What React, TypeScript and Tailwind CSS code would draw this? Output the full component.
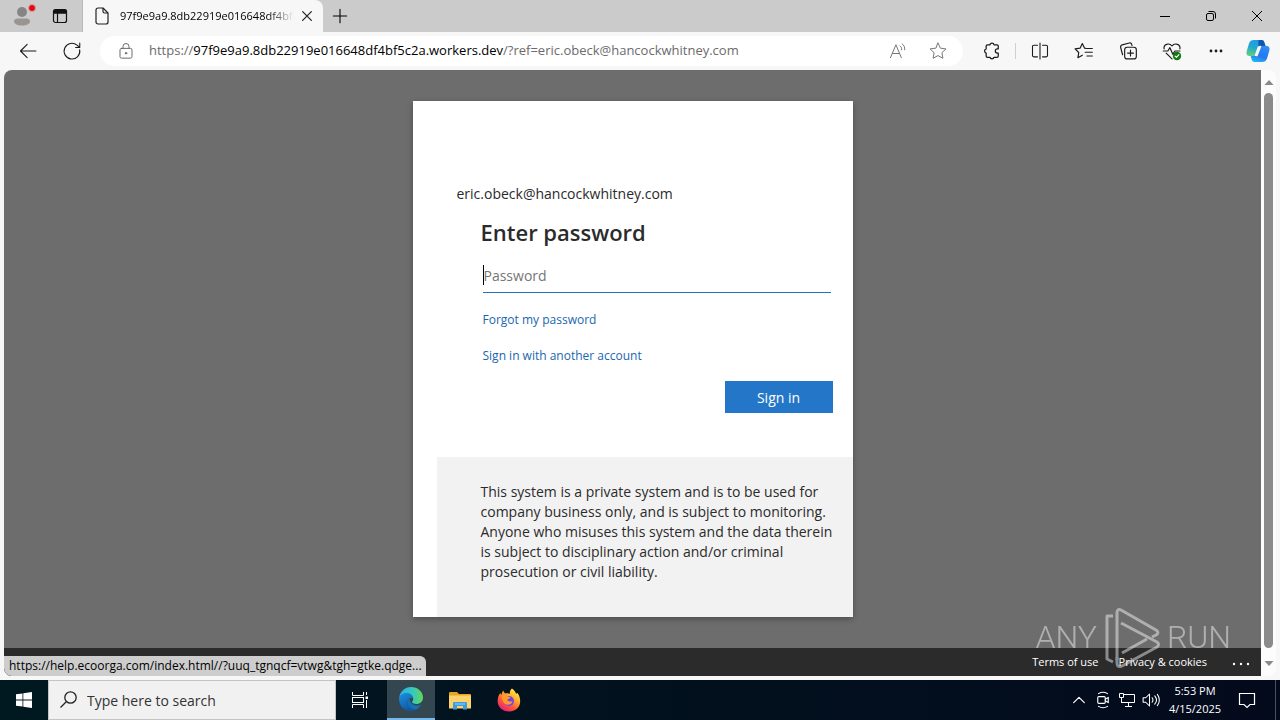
import { useState, type ReactNode } from 'react';

const TAB_TITLE = '97f9e9a9.8db22919e016648df4bf5c2a.workers.dev';

interface IconProps {
  size?: number;
  width?: number;
  className?: string;
  children: ReactNode;
}

// 24x24 line icon shared by the browser chrome and the tray
function Icon({ size = 20, width = 1.3, className, children }: IconProps) {
  return (
    <svg
      width={size}
      height={size}
      viewBox="0 0 24 24"
      fill="none"
      stroke="currentColor"
      strokeWidth={width}
      strokeLinecap="round"
      strokeLinejoin="round"
      className={className}
      aria-hidden="true"
    >
      {children}
    </svg>
  );
}

function ToolButton({ label, children }: { label: string; children: ReactNode }) {
  return (
    <button aria-label={label} className="flex h-8 w-11 shrink-0 items-center justify-center">
      {children}
    </button>
  );
}

function TabStrip() {
  return (
    <div className="flex h-8 shrink-0 bg-[#cbcbcb]">
      <button aria-label="Profile" className="relative flex w-11 items-center justify-center">
        <svg width="20" height="20" viewBox="0 0 20 20" aria-hidden="true">
          <circle cx="10" cy="6" r="5" fill="#858585" />
          <path d="M2 15.500c0-2 1.500-3 3.500-3h9c2 0 3.500 1 3.500 3 0 2.500-4 4-8 4s-8-1.500-8-4z" fill="#9a9590" />
        </svg>
        <span className="absolute top-1 left-7 size-2 rounded-full border border-[#e4a0a0] bg-[#dc0a14]" />
      </button>
      <button aria-label="Tab actions" className="flex w-8 items-center justify-center">
        <svg width="16" height="16" viewBox="0 0 16 16" fill="none" stroke="#111" aria-hidden="true">
          <rect x="1.500" y="1.500" width="13" height="13" rx="2" strokeWidth="1.200" />
          <path d="M1.500 3.500h13M1.500 2.500h13M2 5h12" strokeWidth="1.500" />
          <path d="M5.500 5v9" strokeWidth="1.200" />
        </svg>
      </button>
      <div className="ml-1.5 w-px bg-[#b9b9b9]" />
      <div className="flex w-60 items-center rounded-tr-lg bg-[#f7f7f7] pl-3">
        <svg width="14" height="18" viewBox="0 0 14 18" fill="none" stroke="#222" strokeWidth="1.200" aria-hidden="true">
          <path d="M1 3a2 2 0 0 1 2-2h5l5 5v9a2 2 0 0 1-2 2H3a2 2 0 0 1-2-2z" strokeLinejoin="round" />
          <path d="M8 1v3.500A1.500 1.500 0 0 0 9.500 6H13" />
        </svg>
        <span className="ml-[11px] w-[174px] overflow-hidden mask-r-from-85% mask-r-to-100% text-[11px] whitespace-nowrap text-black">
          {TAB_TITLE}
        </span>
        <button aria-label="Close tab" className="ml-[3px] flex size-5 items-center justify-center text-[#222]">
          <Icon size={16} width={1.900}>
            <path d="M5.500 5.500l13 13M18.500 5.500l-13 13" />
          </Icon>
        </button>
      </div>
      <button aria-label="New tab" className="ml-px flex w-8 items-center justify-center text-black">
        <Icon size={20} width={1.300}>
          <path d="M12 4v16M4 12h16" />
        </Icon>
      </button>
      <div className="ml-auto flex text-black">
        <button aria-label="Minimize" className="flex w-[46px] items-center justify-center">
          <svg width="10" height="10" viewBox="0 0 10 10" stroke="currentColor" aria-hidden="true">
            <path d="M0 5.500h10" />
          </svg>
        </button>
        <button aria-label="Restore" className="flex w-[46px] items-center justify-center">
          <svg width="12" height="12" viewBox="0 0 12 12" fill="none" stroke="currentColor" aria-hidden="true">
            <rect x="1.500" y="3.500" width="7" height="7" rx="1.500" />
            <path d="M3.500 1.500H8A2.500 2.500 0 0 1 10.500 4v4.500" />
          </svg>
        </button>
        <button aria-label="Close" className="flex w-[46px] items-center justify-center">
          <svg width="12" height="12" viewBox="0 0 12 12" stroke="currentColor" aria-hidden="true">
            <path d="M1 1l10 10M11 1L1 11" />
          </svg>
        </button>
      </div>
    </div>
  );
}

function CopilotLogo() {
  return (
    <svg width="24" height="24" viewBox="0 0 24 24" aria-hidden="true">
      <defs>
        <linearGradient id="cpLeft" x1="0.600" y1="0" x2="0.300" y2="1">
          <stop offset="0" stopColor="#1b9be8" />
          <stop offset="0.500" stopColor="#22a9cf" />
          <stop offset="1" stopColor="#5fd07f" />
        </linearGradient>
        <linearGradient id="cpRight" x1="0.700" y1="0" x2="0.300" y2="1">
          <stop offset="0" stopColor="#2f8df5" />
          <stop offset="0.600" stopColor="#2677f0" />
          <stop offset="1" stopColor="#22b6f3" />
        </linearGradient>
      </defs>
      <path d="M8 1h7.500c1.800 0 2.500 1.200 3 3l1 3h-4c-2 0-3 1-3.600 3l-1.500 5c-.5 1.400-1.300 2-2.900 2H3.500C.8 17 0 15 .6 12.500L3 4.500C3.800 2 5.500 1 8 1z" fill="url(#cpLeft)" />
      <path d="M12.500 1h3c1.800 0 2.500 1.200 3 3l1 3h-4c-1.500 0-2.500.8-3.200 2z" fill="#1456ae" />
      <path d="M16 23H8.500c-1.800 0-2.500-1.200-3-3l-.8-3H8c2 0 3-1 3.600-3l1.500-5c.5-1.400 1.300-2 2.900-2h4.500c2.700 0 3.500 2 2.900 4.500L21 19.500c-.8 2.500-2.500 3.500-5 3.500z" fill="url(#cpRight)" />
      <path d="M14.500 7.500l-3.500 9-1.500-.2 3-8.300z" fill="#f7f7f7" stroke="#f7f7f7" strokeWidth="1.600" strokeLinejoin="round" />
    </svg>
  );
}

function Toolbar() {
  return (
    <div className="flex h-[38px] shrink-0 items-center bg-[#f7f7f7] pl-1.5 text-[#1b1b1b]">
      <ToolButton label="Back">
        <Icon>
          <path d="M3 12h18.500M11 4l-8 8 8 8" />
        </Icon>
      </ToolButton>
      <ToolButton label="Refresh">
        <Icon>
          <path d="M21.200 10.500A9.400 9.400 0 1 1 18 5l3 2.500M21.300 2.500v5.200h-5" />
        </Icon>
      </ToolButton>
      <div className="mr-[7px] ml-1.5 flex h-[30px] min-w-0 flex-1 items-center rounded-full bg-white pl-4">
        <button aria-label="Site information" className="flex w-5 justify-center text-[#666]">
          <Icon size={18} width={1.300}>
            <rect x="4" y="8.500" width="16" height="13" rx="2" />
            <path d="M8 8.500V6a4 4 0 0 1 8 0v2.500" />
            <circle cx="12" cy="15" r="1" fill="currentColor" />
          </Icon>
        </button>
        <div
          role="textbox"
          aria-label="Address bar"
          contentEditable
          suppressContentEditableWarning
          className="ml-[13px] flex-1 overflow-hidden text-[13px] whitespace-nowrap text-[#6b6b6b] outline-none"
        >
          https://<span className="text-black">{TAB_TITLE}</span>/?ref=eric.obeck@hancockwhitney.com
        </div>
        <button aria-label="Read aloud" className="flex w-10 justify-center text-[#777]">
          <Icon size={20} width={1.200}>
            <path d="M3 20L9.500 4.500 16 20M5.300 15h8.500M14.500 6c1.500 1 2 2.500 1.800 4.500M17 3.500c2.500 1.700 3.300 4 3 7" />
          </Icon>
        </button>
        <button aria-label="Add to favorites" className="mr-[5px] flex w-10 justify-center text-[#777]">
          <Icon size={20} width={1.200}>
            <path d="M12 2.500l2.900 6.100 6.600.9-4.800 4.600 1.200 6.600-5.900-3.200-5.900 3.200 1.200-6.600-4.800-4.600 6.600-.9z" />
          </Icon>
        </button>
      </div>
      <ToolButton label="Extensions">
        <Icon size={20} width={1.500}>
          <path d="M6.500 4.500h3a2.600 2.600 0 0 1 5 0H18a1.500 1.500 0 0 1 1.500 1.500v3.500h-1a2.500 2.500 0 0 0 0 5h1V18a1.500 1.500 0 0 1-1.500 1.500h-3.500a2.600 2.600 0 0 1-5 0h-3A1.500 1.500 0 0 1 5 18v-3.500a2.600 2.600 0 0 1 0-5V6a1.500 1.500 0 0 1 1.500-1.500z" />
        </Icon>
      </ToolButton>
      <div className="mr-0.5 ml-px h-4 w-px shrink-0 bg-[#cfcfcf]" />
      <ToolButton label="Split screen">
        <Icon size={20} width={1.300}>
          <path d="M9 5H4.500A1.500 1.500 0 0 0 3 6.500v11A1.500 1.500 0 0 0 4.500 19H9M15 5h4.500A1.500 1.500 0 0 1 21 6.500v11a1.500 1.500 0 0 1-1.500 1.500H15M12 2.500v19" />
        </Icon>
      </ToolButton>
      <ToolButton label="Favorites">
        <Icon size={20} width={1.400}>
          <path d="M15 9l-2.300-.4L10 3 7.300 8.600l-6 .9 4.400 4.300-1 6.200L10 17M15.500 9H22M13.500 13.500H22M15.500 18H22" />
        </Icon>
      </ToolButton>
      <ToolButton label="Collections">
        <Icon size={20} width={1.400}>
          <rect x="8" y="7.500" width="14" height="14" rx="3" />
          <path d="M15 11v7M11.500 14.500h7M5.500 16.500L3.200 7.800A2.500 2.500 0 0 1 5 4.700L13.500 2.400a2.500 2.500 0 0 1 3 1.800l.3 1" />
        </Icon>
      </ToolButton>
      <ToolButton label="Browser essentials">
        <Icon size={20} width={1.400}>
          <path d="M2.500 9.500C1.500 4 8.500 1.500 12 6c3.500-4.500 10.500-2 9.500 3.500M5 14.500l7 7M1.500 12h5.500l2.500-4 3.500 8 2.500-4h6" />
          <circle cx="18" cy="18" r="5" fill="#0f7b0f" stroke="none" />
          <path d="M15.700 18.200l1.600 1.500 3-3.300" stroke="#fff" />
        </Icon>
      </ToolButton>
      <ToolButton label="Settings and more">
        <svg width="14" height="4" viewBox="0 0 14 4" fill="currentColor" aria-hidden="true">
          <circle cx="2" cy="2" r="1.400" />
          <circle cx="7" cy="2" r="1.400" />
          <circle cx="12" cy="2" r="1.400" />
        </svg>
      </ToolButton>
      <button aria-label="Copilot" className="mr-0.5 flex w-10 shrink-0 items-center justify-center">
        <CopilotLogo />
      </button>
    </div>
  );
}

function SignInCard() {
  const [password, setPassword] = useState('');

  return (
    <div className="w-[440px] bg-white text-[#2b2b2b] shadow-[0_2px_6px_rgba(0,0,0,0.3)]">
      <form onSubmit={(e) => e.preventDefault()} className="flex flex-col pt-[81px] pr-5 pb-11 pl-11">
        <p className="text-[14px] leading-6">eric.obeck@hancockwhitney.com</p>
        <div className="flex flex-col pt-2.5 pl-6">
          <h1 className="text-[22px] leading-8 font-semibold">Enter password</h1>
          <div className="mt-2.5 mr-0.5 ml-0.5 flex h-[35px] items-center border-b border-[#2473b5]">
            <span className="h-5 w-px bg-black" />
            <input
              type="password"
              aria-label="Password"
              placeholder="Password"
              value={password}
              onChange={(e) => setPassword(e.target.value)}
              className="min-w-0 flex-1 text-[14px] outline-none placeholder:text-[#767676]"
            />
          </div>
          <div className="mt-[17px] ml-0.5 flex flex-col gap-4 text-[12px] leading-5 text-[#1b66ae]">
            <a href="#forgot">Forgot my password</a>
            <a href="#other">Sign in with another account</a>
          </div>
          <button type="submit" className="mt-[15px] h-8 w-[108px] self-end bg-[#2477c8] text-[14px] text-white">
            Sign in
          </button>
        </div>
      </form>
      <p className="ml-6 h-40 bg-[#f2f2f2] pt-[25px] pl-11 text-[14px] leading-5">
        This system is a private system and is to be used for
        <br />
        company business only, and is subject to monitoring.
        <br />
        Anyone who misuses this system and the data therein
        <br />
        is subject to disciplinary action and/or criminal
        <br />
        prosecution or civil liability.
      </p>
    </div>
  );
}

function Watermark() {
  return (
    <div className="pointer-events-none absolute right-[30px] bottom-2 flex items-center gap-1.5 font-['Roboto',sans-serif] text-[32px] leading-none font-light text-white opacity-45">
      <span>ANY</span>
      <svg width="58" height="62" viewBox="0 0 58 62" fill="none" stroke="currentColor" strokeWidth="3" strokeLinejoin="round" aria-hidden="true">
        <path d="M10 10H4v43l6 3M14 54V7c0-3 1.500-4.500 4-3l35 20c2.500 1.500 2.500 4 0 5l-4 2" />
        <path d="M18 17l36 19c2 1.500 2 3.500 0 5L19 60c-3 1.500-5 0-5-3v-6M19 47l25-14" />
      </svg>
      <span>RUN</span>
    </div>
  );
}

function Viewport() {
  return (
    <div className="mr-1 mb-1 ml-1 flex min-h-0 flex-1">
      <div className="relative flex min-w-0 flex-1 flex-col overflow-hidden rounded-l-lg bg-[#6d6d6d]">
        <main className="flex flex-1 items-center justify-center">
          <SignInCard />
        </main>
        <footer className="flex h-7 shrink-0 items-center justify-end bg-[#2b2b2b] pr-[10px] text-[11px] text-white">
          <a href="#terms">Terms of use</a>
          <a href="#privacy" className="ml-5">Privacy &amp; cookies</a>
          <button aria-label="More options" className="ml-6 flex h-7 w-5 items-center justify-center pt-1">
            <svg width="18" height="4" viewBox="0 0 18 4" fill="currentColor" aria-hidden="true">
              <circle cx="2" cy="2" r="1.200" />
              <circle cx="9" cy="2" r="1.200" />
              <circle cx="16" cy="2" r="1.200" />
            </svg>
          </button>
        </footer>
        <Watermark />
        <div className="absolute bottom-0 left-0 h-5 w-[422px] rounded-tr-md bg-[#cdcdcd] pl-[5px] text-[12px] leading-5 whitespace-nowrap text-black">
          https://help.ecoorga.com/index.html//?uuq_tgnqcf=vtwg&amp;tgh=gtke.qdge...
        </div>
      </div>
      <div className="flex w-[15px] shrink-0 flex-col items-center rounded-r-lg bg-[#fcfcfc] py-2 text-[#8a8a8a]">
        <svg width="10" height="15" viewBox="0 0 10 15" fill="currentColor" aria-hidden="true">
          <path d="M5 2l4.500 5h-9z" />
        </svg>
        <div className="w-[9px] flex-1 rounded-full bg-[#8a8a8a]" />
        <svg width="10" height="20" viewBox="0 0 10 20" fill="currentColor" aria-hidden="true">
          <path d="M5 18l4.500-5h-9z" />
        </svg>
      </div>
    </div>
  );
}

function EdgeLogo() {
  return (
    <svg width="24" height="24" viewBox="0 0 24 24" aria-hidden="true">
      <defs>
        <linearGradient id="edgeTop" x1="0" y1="0.500" x2="1" y2="0.500">
          <stop offset="0" stopColor="#2bb0e6" />
          <stop offset="0.550" stopColor="#35c7c0" />
          <stop offset="1" stopColor="#62d957" />
        </linearGradient>
        <linearGradient id="edgeLow" x1="0" y1="0" x2="0.500" y2="1">
          <stop offset="0" stopColor="#1f8fe0" />
          <stop offset="1" stopColor="#0c59a4" />
        </linearGradient>
      </defs>
      <path d="M.3 10.500C1 4.500 6 0 12 0c7 0 12 5 12 10.500 0 4-3 6.500-6.500 6.500-3 0-4.500-1.200-4.500-2 0-.6 1.200-1 1.200-3C14.200 9 11 7 7.500 7 4 7 1.300 8.300.3 10.500z" fill="url(#edgeTop)" />
      <path d="M0 12c0-3.500 3.500-6 7.500-6 3.500 0 6.500 2 6.700 5.500-4-1.500-6.200 1.500-5.700 4.500.6 4 4.500 6.500 8.500 6.500-1.500 1-3 1.500-5 1.500C5 24 0 18.500 0 12z" fill="url(#edgeLow)" />
      <path d="M8.500 16c-.4-2.500.8-4.500 3-5-.5 1-.7 2.300-.4 3.300.8 2.700 4 4.200 7 4.200 1.700 0 3-.5 4-1-1.200 2.700-3 4.300-5.100 5-4 0-7.900-2.500-8.500-6.500z" fill="#1471b8" />
    </svg>
  );
}

function FolderLogo() {
  return (
    <svg width="22" height="19" viewBox="0 0 22 19" aria-hidden="true">
      <path d="M0 2a1 1 0 0 1 1-1h7l2 2h11a1 1 0 0 1 1 1v13H0z" fill="#e8a526" />
      <path d="M0 4.500h22v13H0z" fill="#fdd26a" />
      <path d="M4 18.500V12a1 1 0 0 1 1-1h12a1 1 0 0 1 1 1v6.500h-4V15H8v3.500z" fill="#3d9be0" />
      <path d="M6 13h10" stroke="#8fd0f5" />
    </svg>
  );
}

function FirefoxLogo() {
  return (
    <svg width="24" height="24" viewBox="0 0 24 24" aria-hidden="true">
      <defs>
        <linearGradient id="foxBody" x1="0.850" y1="0" x2="0.200" y2="1">
          <stop offset="0" stopColor="#fff44f" />
          <stop offset="0.350" stopColor="#ffb22e" />
          <stop offset="0.650" stopColor="#ff5a36" />
          <stop offset="1" stopColor="#e31587" />
        </linearGradient>
      </defs>
      <path d="M15 .5c3 2 3.500 4 4 5 1 .2 1.500-.5 1.500-.5 5 6.500 3.500 18.500-8.500 18.500C5 23.500 0 18.500.7 12 .9 8.500 2 6.500 3.500 5l.7 2L6 2.500 8 5.500c2-.6 4 0 5 .5C12.500 4 13.500 1.500 15 .5z" fill="url(#foxBody)" />
      <circle cx="12" cy="13" r="5" fill="#7542e5" />
      <path d="M4.500 8c2.500-2 5-1.300 6.500.5l2.500.5c0 1.500-3 1.500-3.500 3.500 2 0 3 2 5.500.5 0 3.500-5 5-8 2.500C5.500 13.800 5 10.500 4.500 8z" fill="#ff9a2c" />
    </svg>
  );
}

function Taskbar() {
  return (
    <div className="flex h-10 shrink-0 bg-linear-to-r from-[#001820] to-[#030a1c] text-white">
      <button aria-label="Start" className="flex w-12 items-center justify-center">
        <svg width="16" height="16" viewBox="0 0 16 16" fill="currentColor" aria-hidden="true">
          <path d="M0 2.300l6.500-.9v6.200H0zM7.300 1.300L16 0v7.600H7.300zM0 8.400h6.500v6.200L0 13.700zM7.300 8.400H16V16l-8.700-1.200z" />
        </svg>
      </button>
      <label className="flex w-72 items-center border border-[#c4c4c4] bg-[#f1f1f1] pl-[11px] text-[#222]">
        <svg width="18" height="18" viewBox="0 0 18 18" fill="none" stroke="currentColor" strokeWidth="1.300" aria-hidden="true">
          <circle cx="10.500" cy="6.500" r="5.700" />
          <path d="M6.500 10.500L.5 16.500" />
        </svg>
        <input
          type="text"
          aria-label="Search"
          placeholder="Type here to search"
          className="ml-[9px] min-w-0 flex-1 text-[14px] outline-none placeholder:text-[#333]"
        />
      </label>
      <button aria-label="Task view" className="flex w-12 items-center justify-center">
        <svg width="18" height="18" viewBox="0 0 18 18" fill="none" stroke="currentColor" aria-hidden="true">
          <path d="M1.500 1v3.500h11V1M1.500 17v-3.500h11V17M1.500 6v6M12.500 6v6M1.500 6.500h11M1.500 11.500h11M15.500 1v3M15.500 9v8" />
          <path d="M14.500 5.500h2.500v2.500h-2.500z" fill="currentColor" stroke="none" />
        </svg>
      </button>
      <button aria-label="Microsoft Edge" className="ml-[3px] flex w-12 items-center justify-center border-b-2 border-[#76b9ed] bg-[#34464f]">
        <EdgeLogo />
      </button>
      <button aria-label="File Explorer" className="flex w-[50px] items-center justify-center">
        <FolderLogo />
      </button>
      <button aria-label="Firefox" className="flex w-12 items-center justify-center">
        <FirefoxLogo />
      </button>
      <div className="ml-auto flex">
        <button aria-label="Show hidden icons" className="flex w-6 items-center justify-center">
          <Icon size={16} width={1.800}>
            <path d="M4 16l8-8 8 8" />
          </Icon>
        </button>
        <button aria-label="Meet now" className="flex w-6 items-center justify-center">
          <Icon size={18} width={1.500}>
            <rect x="5" y="7.500" width="10" height="9" rx="1.500" />
            <path d="M15 11l4-2.500v7L15 13M6 3.500c4-2.500 8-2.500 12 0M6 20.500c4 2.500 8 2.500 12 0" />
          </Icon>
        </button>
        <button aria-label="Network" className="flex w-6 items-center justify-center">
          <svg width="18" height="16" viewBox="0 0 18 16" fill="none" stroke="currentColor" aria-hidden="true">
            <path d="M5.500 2.500h11v8H3.500V6M10.500 10.500v4M7 14.500h7M1.500 1.500h4v4h-4zM3.500 6v5" />
          </svg>
        </button>
        <button aria-label="Volume" className="flex w-6 items-center justify-center">
          <Icon size={18} width={1.400}>
            <path d="M1.500 9v6h3.500l5 5V4L5 9zM13.500 9c1.500 2 1.500 4 0 6M17 6.500c3 3.500 3 7.500 0 11M20.500 4.500c3.500 5 3.500 10 0 15" />
          </Icon>
        </button>
        <div className="flex w-16 flex-col items-center justify-center text-[11px] leading-[18px]">
          <span>5:53 PM</span>
          <span>4/15/2025</span>
        </div>
        <button aria-label="Notifications" className="flex w-10 items-center justify-center">
          <svg width="18" height="18" viewBox="0 0 18 18" fill="none" stroke="currentColor" strokeWidth="1.200" aria-hidden="true">
            <path d="M1.500 2.500h15v11H12l-3 3-3-3H1.500z" />
          </svg>
        </button>
        <div className="ml-2 w-[5px] border-l border-[#4a5060]" />
      </div>
    </div>
  );
}

export default function App() {
  return (
    <div className="flex h-screen flex-col overflow-hidden bg-[#f7f7f7] font-['Open_Sans','Noto_Sans',sans-serif]">
      <TabStrip />
      <Toolbar />
      <Viewport />
      <Taskbar />
    </div>
  );
}
